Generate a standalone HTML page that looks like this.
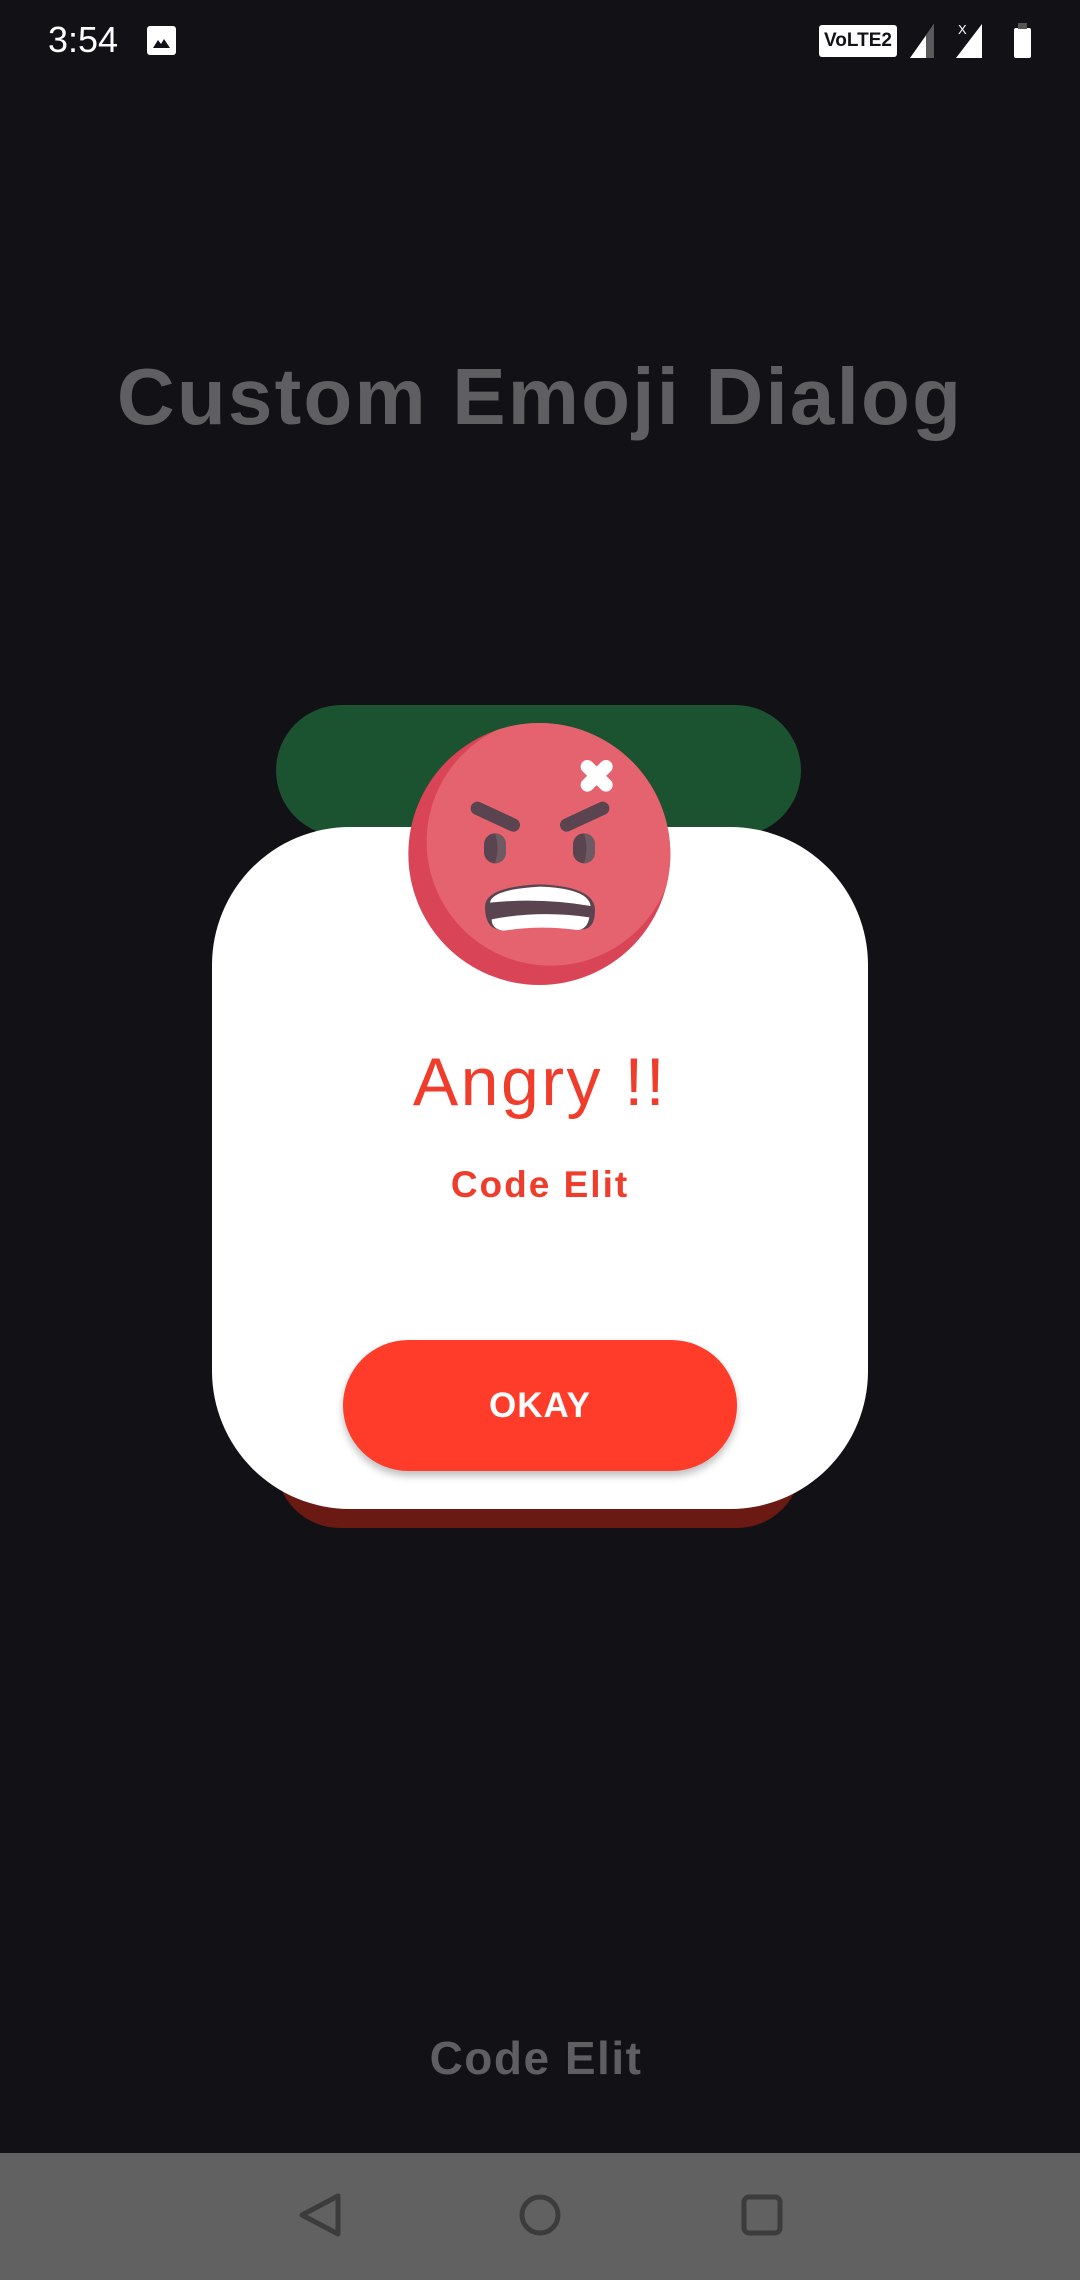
<!DOCTYPE html>
<html><head><meta charset="utf-8"><style>
*{margin:0;padding:0;box-sizing:border-box}
body{width:1080px;height:2280px;background:#121116;position:relative;overflow:hidden;font-family:"Liberation Sans",sans-serif}
.abs{position:absolute}
.c{text-align:center;left:0;width:1080px}
</style></head><body>
<div class="abs" style="left:48px;top:18px;color:#fff;font-size:36px;line-height:44px">3:54</div>
<div class="abs" style="left:147px;top:26px;width:29px;height:29px;background:#fff;border-radius:3px"><svg width="29" height="29"><path d="M6 22 L11 14 L14 18 L17 13 L23 22Z" fill="#121116"/></svg></div>
<div class="abs" style="left:819px;top:25px;width:78px;height:32px;background:#fff;border-radius:3px;color:#121116;font-weight:bold;font-size:19px;line-height:32px;text-align:center">VoLTE2</div>
<svg class="abs" style="left:910px;top:22px" width="130" height="40"><path d="M0 36 L24 2 L24 36Z" fill="#fff"/><path d="M16 36 L16 13 L24 2 L24 36Z" fill="#5a5a5a"/><path d="M46 36 L72 2 L72 36Z" fill="#fff"/><text x="48" y="12" fill="#fff" font-size="13" font-family="Liberation Sans">X</text><rect x="104" y="6" width="17" height="30" rx="2" fill="#fff"/><rect x="108" y="1" width="9" height="6" fill="#555"/></svg>
<div class="abs c" style="top:350px;font-size:80px;font-weight:bold;color:#5f5f62;line-height:94px;letter-spacing:2.2px">Custom Emoji Dialog</div>
<div class="abs" style="left:276px;top:705px;width:525px;height:131px;border-radius:66px;background:#1b5230"></div>
<div class="abs" style="left:276px;top:1400px;width:525px;height:128px;border-radius:64px;background:#6b1a13"></div>
<div class="abs" style="left:212px;top:827px;width:656px;height:682px;border-radius:138px;background:#fff"></div>
<svg class="abs" style="left:380px;top:680px" width="320" height="340" viewBox="0 0 960 1020">
<defs><clipPath id="cp"><circle cx="478" cy="522" r="393"/></clipPath></defs>
<circle cx="478" cy="522" r="393" fill="#d94556"/>
<circle cx="512" cy="485" r="372" fill="#e4636f" clip-path="url(#cp)"/>
<g stroke="#5a4450" stroke-width="40" stroke-linecap="round"><line x1="292" y1="385" x2="400" y2="435"/><line x1="560" y1="435" x2="668" y2="385"/></g>
<rect x="312" y="460" width="66" height="90" rx="33" fill="#5a4450"/><rect x="579" y="460" width="66" height="90" rx="33" fill="#5a4450"/>
<path d="M345 460 A33 33 0 0 1 378 493 L378 517 A33 33 0 0 1 345 550 Q360 505 345 460Z" fill="#6e5a63"/>
<path d="M612 460 A33 33 0 0 1 645 493 L645 517 A33 33 0 0 1 612 550 Q627 505 612 460Z" fill="#6e5a63"/>
<path d="M315 680 Q315 620 480 613 Q645 620 645 690 Q645 752 600 748 Q480 732 370 750 Q315 752 315 680Z" fill="#5a4450"/>
<path d="M330 668 Q335 628 480 620 Q625 625 632 678 Q480 652 330 668Z" fill="#fff"/>
<path d="M335 718 Q480 690 628 712 Q622 748 592 750 Q480 735 372 752 Q335 748 335 718Z" fill="#fff"/>
<g stroke="#fff" stroke-width="40" stroke-linecap="round"><line x1="622" y1="260" x2="678" y2="315"/><line x1="678" y1="260" x2="622" y2="315"/></g>
</svg>
<div class="abs c" style="top:1042px;font-size:68px;color:#f03c2a;line-height:80px;letter-spacing:2.5px">Angry !!</div>
<div class="abs c" style="top:1163px;font-size:37px;font-weight:bold;color:#f03c2a;line-height:44px;letter-spacing:2px">Code Elit</div>
<div class="abs" style="left:343px;top:1340px;width:394px;height:131px;border-radius:66px;background:#ff3b2a;color:#fff;font-weight:bold;font-size:35px;line-height:131px;text-align:center;letter-spacing:1px;box-shadow:0 5px 8px rgba(0,0,0,0.25)">OKAY</div>
<div class="abs c" style="top:2030px;font-size:46px;font-weight:bold;color:#5f5f62;line-height:56px;letter-spacing:1.5px;padding-right:8px">Code Elit</div>
<div class="abs" style="left:0;top:2153px;width:1080px;height:127px;background:#616161"></div>
<svg class="abs" style="left:0;top:2153px" width="1080" height="127">
<path d="M338 43 L302 62 L338 81Z" fill="none" stroke="#3c3c3c" stroke-width="5" stroke-linejoin="round"/>
<circle cx="540" cy="62" r="18" fill="none" stroke="#3c3c3c" stroke-width="5"/>
<rect x="744" y="44" width="36" height="36" rx="5" fill="none" stroke="#3c3c3c" stroke-width="5"/>
</svg>
</body></html>
